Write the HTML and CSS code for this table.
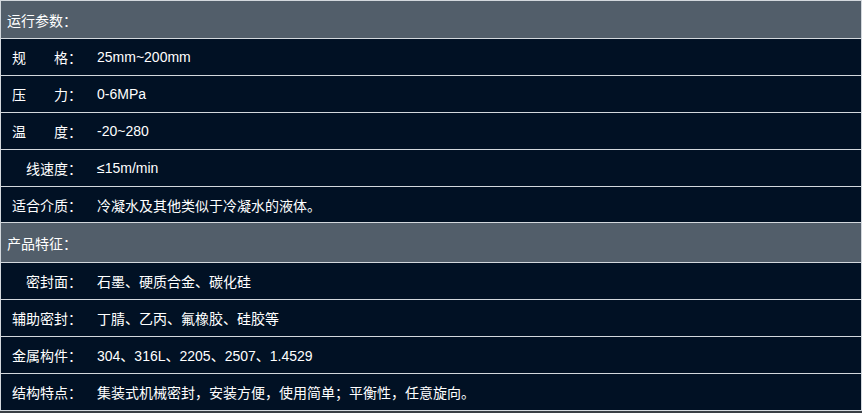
FILE: index.html
```html
<!DOCTYPE html>
<html lang="zh-CN">
<head>
<meta charset="utf-8">
<link rel="stylesheet" href="styles.css">
<title>参数</title>
</head>
<body>
<table class="spec">
  <tr class="head h1"><td colspan="2">运行参数：</td></tr>
  <tr class="row"><td class="label"><span class="split"><span>规</span><span>格：</span></span></td><td class="value">25mm~200mm</td></tr>
  <tr class="row"><td class="label"><span class="split"><span>压</span><span>力：</span></span></td><td class="value">0-6MPa</td></tr>
  <tr class="row"><td class="label"><span class="split"><span>温</span><span>度：</span></span></td><td class="value">-20~280</td></tr>
  <tr class="row"><td class="label"><span class="box">线速度：</span></td><td class="value">≤15m/min</td></tr>
  <tr class="row r6"><td class="label"><span class="box">适合介质：</span></td><td class="value">冷凝水及其他类似于冷凝水的液体。</td></tr>
  <tr class="head h2"><td colspan="2">产品特征：</td></tr>
  <tr class="row"><td class="label"><span class="box">密封面：</span></td><td class="value">石墨、硬质合金、碳化硅</td></tr>
  <tr class="row"><td class="label"><span class="box">辅助密封：</span></td><td class="value">丁腈、乙丙、氟橡胶、硅胶等</td></tr>
  <tr class="row"><td class="label"><span class="box">金属构件：</span></td><td class="value">304、316L、2205、2507、1.4529</td></tr>
  <tr class="row"><td class="label"><span class="box">结构特点：</span></td><td class="value">集装式机械密封，安装方便，使用简单；平衡性，任意旋向。</td></tr>
</table>
</body>
</html>
```
FILE: styles.css
```css
html, body {
  margin: 0;
  padding: 0;
  background: #3a3f45;
}
.spec {
  width: 862px;
  border-collapse: collapse;
  font-family: "Liberation Sans", "Noto Sans CJK SC", sans-serif;
  font-size: 14px;
  color: #ffffff;
  background: #011124;
  border: 1px solid #d3d8dd;
}
.spec td {
  border-top: 1px solid #d3d8dd;
  border-bottom: 1px solid #d3d8dd;
  padding: 0;
  vertical-align: middle;
  white-space: nowrap;
}
.head td {
  background: #525e6a;
  padding-left: 6px;
}
.h1 td { height: 37px; }
.h2 td { height: 39px; }
.row td { height: 36px; }
.r6 td { height: 35px; }
.label {
  width: 85px;
  padding-left: 11px !important;
}
.box {
  display: block;
  width: 70px;
  text-align: right;
}
.split {
  display: flex;
  justify-content: space-between;
  width: 70px;
}
.value {
  padding-left: 0;
}
```
